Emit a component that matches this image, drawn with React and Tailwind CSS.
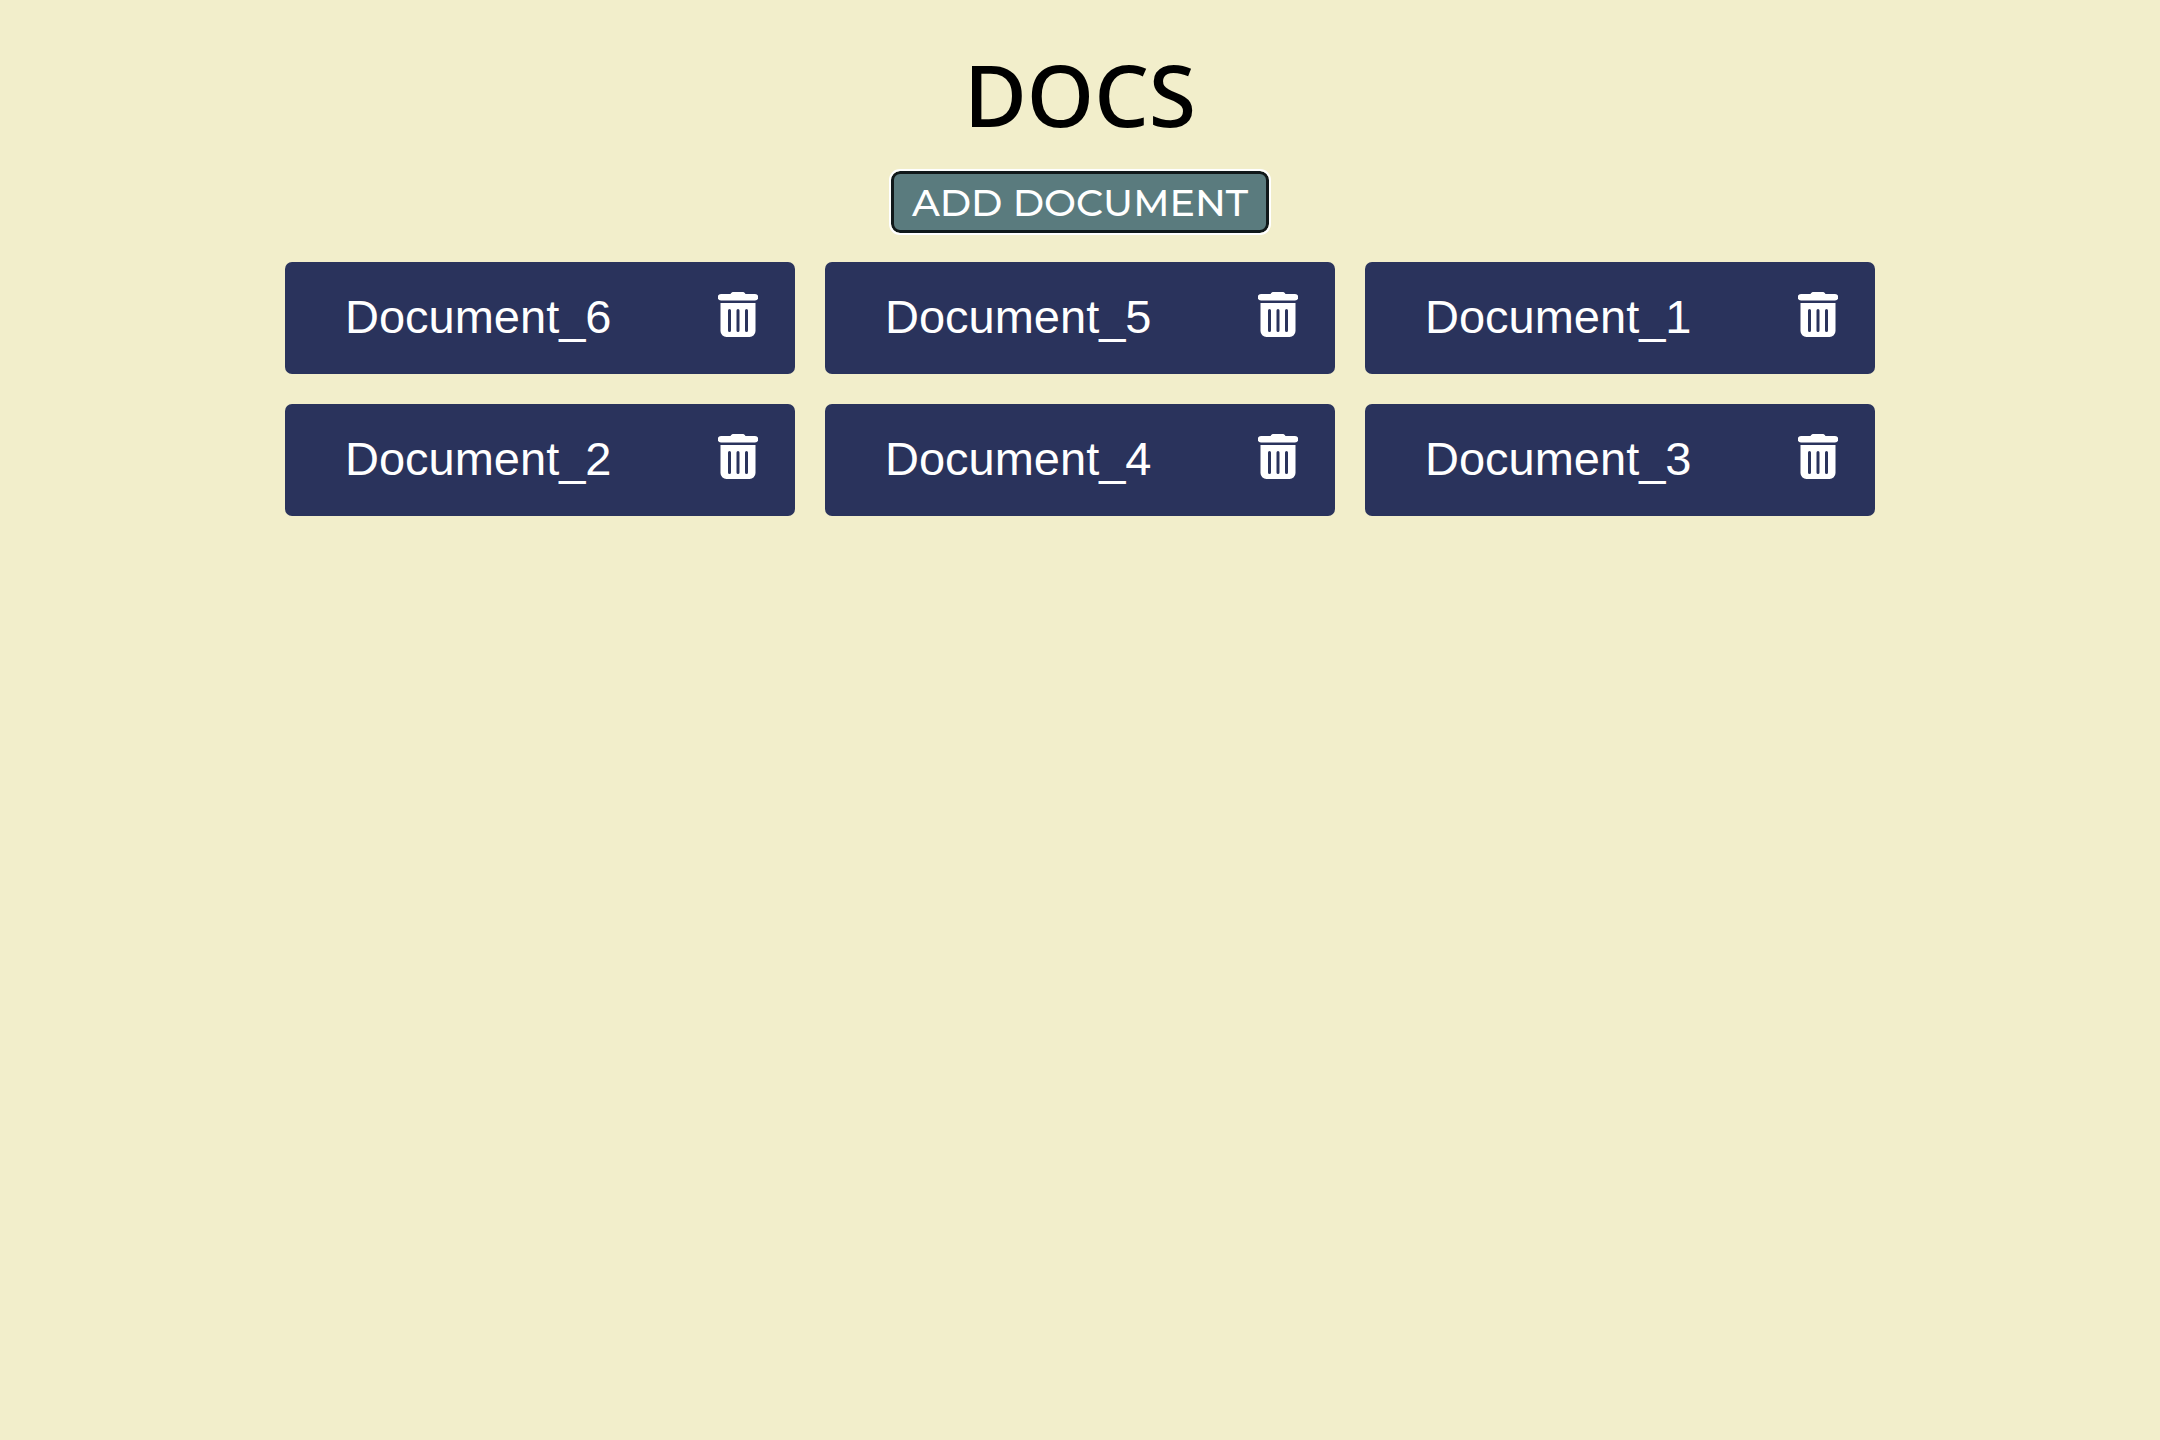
const documents = ["Document_6", "Document_5", "Document_1", "Document_2", "Document_4", "Document_3"];

function TrashIcon() {
  return (
    <svg viewBox="0 0 40 46" className="h-[46px] w-10" fill="currentColor" aria-hidden="true">
      <path d="M12.5 2C13.3.6 14.3 0 15.5 0H24.500C25.700 0 26.700.6 27.500 2H37A3.200 3.200 0 0 1 37 8.500H3A3.200 3.200 0 0 1 3 2Z" />
      <path
        fillRule="evenodd"
        d="M2.500 11H37.500V39A6 6 0 0 1 31.500 45H8.500A6 6 0 0 1 2.500 39ZM11.500 17A1.500 1.500 0 0 0 10 18.500V38.500A1.500 1.500 0 0 0 13 38.500V18.500A1.500 1.500 0 0 0 11.500 17ZM20 17A1.500 1.500 0 0 0 18.500 18.500V38.500A1.500 1.500 0 0 0 21.500 38.500V18.500A1.500 1.500 0 0 0 20 17ZM28.500 17A1.500 1.500 0 0 0 27 18.500V38.500A1.500 1.500 0 0 0 30 38.500V18.500A1.500 1.500 0 0 0 28.500 17Z"
      />
    </svg>
  );
}

function DocumentCard({ name }) {
  return (
    <li className="flex h-28 items-start justify-between rounded-[7px] bg-[#2a335c] pl-[60px] pr-[37px] pt-[30px] text-white">
      <a href="#" className="font-['Liberation_Sans',Arial,sans-serif] text-[47px] leading-[50px]">
        {name}
      </a>
      <button type="button" aria-label={`Delete ${name}`} className="cursor-pointer">
        <TrashIcon />
      </button>
    </li>
  );
}

export default function App() {
  return (
    <main className="flex min-h-screen flex-col items-center bg-[#f2eecb] px-8 pt-8">
      <h1 className="font-['Noto_Sans',sans-serif] text-[86px] font-medium leading-[124px] text-black">DOCS</h1>
      <button
        type="button"
        className="mt-[15px] h-[62px] cursor-pointer rounded-[9px] border-3 border-[#10181a] bg-[#5a7b7e] px-[18px] pt-0.5 font-['Montserrat','Inter',sans-serif] text-[38px] font-medium leading-[54px] text-white outline-2 outline-white"
      >
        ADD DOCUMENT
      </button>
      <ul className="mt-[29px] grid w-full max-w-[1590px] grid-cols-3 gap-[30px]">
        {documents.map((name) => (
          <DocumentCard key={name} name={name} />
        ))}
      </ul>
    </main>
  );
}
